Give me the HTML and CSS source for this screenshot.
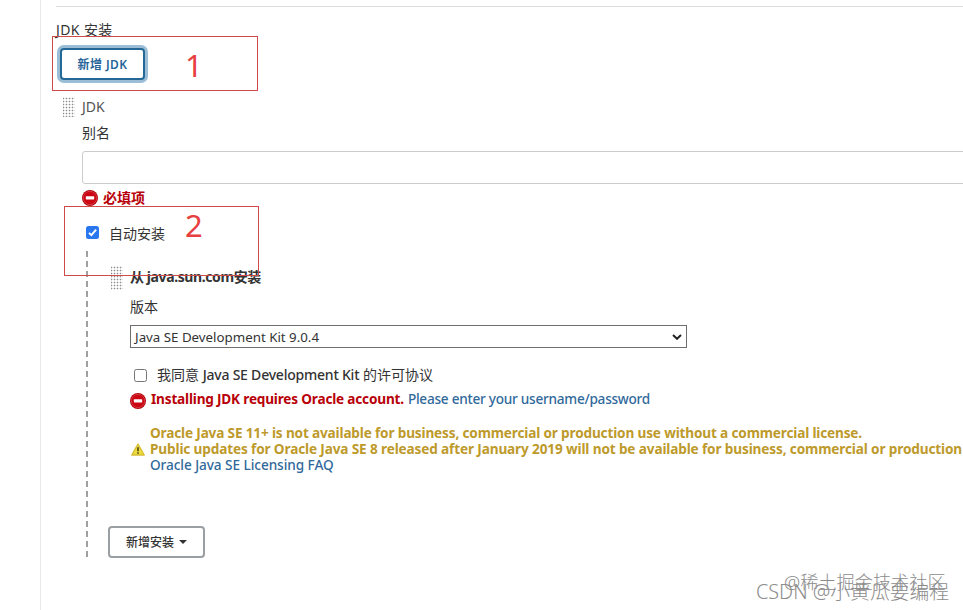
FILE: index.html
```
<!DOCTYPE html>
<html lang="zh-CN">
<head>
<meta charset="utf-8">
<title>JDK 安装</title>
<link rel="stylesheet" href="styles.css">
</head>
<body>
<svg width="0" height="0" class="defs">
  <symbol id="stop" viewBox="0 0 16 16">
    <circle cx="8" cy="8" r="8" fill="#b50009"/>
    <circle cx="8" cy="8" r="6.7" fill="#cc0613" stroke="#da5f66" stroke-width=".6"/>
    <rect x="3.8" y="6.2" width="8.4" height="3.2" rx=".6" fill="#fff"/>
  </symbol>
</svg>
<main class="page">
  <section class="content">
    <h2 class="heading"><span class="t-heading">JDK 安装</span></h2>
    <button class="add"><span class="t-add">新增 JDK</span></button>
    <div class="tool">
      <div class="name"><i class="grip"></i><span class="t-jdk">JDK</span></div>
      <label class="alias">别名</label>
      <input class="field" type="text">
      <div class="error required"><svg class="stop"><use href="#stop"/></svg><span>必填项</span></div>
      <label class="auto"><span class="check on"><svg viewBox="0 0 13 13"><path d="M3 6.8 5.4 9.2 10.1 3.6" fill="none" stroke="#fff" stroke-width="1.9"/></svg></span><span>自动安装</span></label>
    </div>
    <div class="installers">
      <div class="installer">
        <div class="title"><i class="grip tall"></i><span class="t-title">从 java.sun.com安装</span></div>
        <label class="version">版本</label>
        <div class="select"><span class="t-select">Java SE Development Kit 9.0.4</span><svg viewBox="0 0 10 6"><path d="m1 1 4 3.8L9 1" fill="none" stroke="#222" stroke-width="2"/></svg></div>
        <label class="agree"><span class="check"></span><span class="t-agree">我同意 <span class="medium">Java SE Development Kit</span> 的许可协议</span></label>
        <div class="error account"><svg class="stop"><use href="#stop"/></svg><span class="t-err">Installing JDK requires Oracle account.</span><a class="t-login">Please enter your username/password</a></div>
        <div class="warning">
          <svg class="warn" viewBox="0 0 14 13"><path d="M7 1 13.2 12H.8Z" fill="#f0dc3c" stroke="#d5bd35" stroke-linejoin="round" stroke-width="1.4"/><path d="M7 4.2v4" stroke="#4b4315" stroke-width="1.6"/><path d="M7 9.2v1.5" stroke="#4b4315" stroke-width="1.6"/></svg>
          <div class="lines">
            <p><span class="t-w1">Oracle Java SE 11+ is not available for business, commercial or production use without a commercial license.</span></p>
            <p><span class="t-w2">Public updates for Oracle Java SE 8 released after January 2019 will not be available for business, commercial or production</span></p>
            <p><a class="t-faq">Oracle Java SE Licensing FAQ</a></p>
          </div>
        </div>
      </div>
      <button class="more"><span>新增安装</span><i class="caret"></i></button>
    </div>
  </section>
</main>
<div class="mark one"></div><span class="num n1">1</span>
<div class="mark two"></div><span class="num n2">2</span>
<div class="watermark wm1">@稀土掘金技术社区</div>
<div class="watermark wm2">CSDN @小黄瓜要编程</div>
</body>
</html>
```
FILE: styles.css
```
* { box-sizing: border-box; }
body { margin: 0; width: 963px; height: 610px; overflow: hidden; position: relative; background: #fff; color: #333; font: 14px/20px "Noto Sans", "Noto Sans CJK SC", sans-serif; }
.defs { position: absolute; }
svg { display: block; flex: none; }
span, a { white-space: nowrap; }
p { margin: 0; }
button { font: inherit; background: #fff; }
.page { margin-left: 40px; height: 610px; border-left: 1px solid #e9e9e9; padding: 6px 0 0 15px; }
.content { border-top: 1px solid #dcdcdc; padding-top: 13px; }
.heading { margin: 0; height: 28px; font-size: 14px; font-weight: 400; line-height: 20px; }
.t-heading { letter-spacing: .4px; }
.add { display: flex; align-items: center; justify-content: center; width: 85px; height: 32px; margin-left: 4px; padding: 2px 0 0; border: 2px solid #246896; border-radius: 4px; box-shadow: 0 0 0 3px #9bbdd6; color: #286599; font-size: 12px; font-weight: 600; letter-spacing: .45px; }
.tool { padding-left: 26px; }
.name { display: flex; align-items: center; height: 20px; margin: 17px 0 0 -19px; color: #555; }
.grip { width: 12px; height: 20px; margin-right: 7px; background: radial-gradient(circle at 1.5px 1.5px, #8c8c8c .7px, transparent 1.1px) -1px 0 / 3px 3px; }
.grip.tall { height: 24px; }
.alias { display: block; height: 28px; padding-top: 6px; margin-bottom: 6px; }
.field { display: block; width: 900px; height: 33px; border: 1px solid #ccc; border-radius: 3px; outline: 0; }
.error { display: flex; align-items: center; color: #b80008; font-weight: 700; }
.stop { width: 16px; height: 16px; margin-right: 5px; }
.required { height: 20px; margin-top: 4px; }
.auto { display: flex; align-items: center; height: 20px; margin: 16px 0 0 4px; }
.check { width: 13px; height: 13px; flex: none; margin-right: 10px; border: 1px solid #767676; border-radius: 2.5px; }
.check.on { position: relative; top: -2px; border: 0; background: #2877ee; }
.installers { height: 307px; margin: 7px 0 0 30px; padding: 15px 0 0 22px; background: repeating-linear-gradient(#a0a0a0 0 6px, transparent 6px 10px) 0 0 / 2px 100% no-repeat; }
.installer { padding-left: 22px; height: 260px; }
.title { display: flex; align-items: center; height: 24px; margin-left: -19px; font-weight: 700; letter-spacing: -.4px; }
.t-title { position: relative; top: -1px; }
.version { display: block; height: 20px; margin: 7px 0 8px; }
.select { display: flex; align-items: center; justify-content: space-between; width: 557px; height: 23px; padding: 0 4px; border: 1px solid #6e6e6e; font-size: 13.3px; }
.select svg { width: 10px; height: 6px; }
.agree { display: flex; align-items: center; height: 20px; margin: 17px 0 0 4px; }
.medium { font-weight: 500; letter-spacing: -.22px; }
.account { height: 20px; margin-top: 4px; font-size: 13.6px; }
.account .stop { position: relative; top: 2px; }
.t-err { letter-spacing: -.19px; }
.t-login { margin-left: 4px; letter-spacing: -.25px; }
a { color: #31699b; font-weight: 500; }
.warning { display: flex; align-items: center; height: 48px; margin-top: 16px; line-height: 16px; color: #bd9a2b; font-weight: 700; font-size: 13.6px; }
.t-w1 { letter-spacing: -.16px; }
.t-w2 { letter-spacing: -.135px; }
.t-faq { letter-spacing: -.06px; }
.warn { width: 14px; height: 13px; margin: 0 5px 0 1px; }
.more { display: flex; align-items: center; justify-content: center; width: 97px; height: 32px; border: 2px solid #999fa2; border-radius: 4px; padding: 2px 0 0; color: #333; font-size: 12px; font-weight: 500; }
.caret { margin: -2px 0 0 5px; border: 4px solid transparent; border-top-color: #333; border-bottom: 0; }
.mark { position: absolute; border: 1px solid #cf4a4a; }
.one { left: 52px; top: 36px; width: 206px; height: 55px; }
.two { left: 64px; top: 206px; width: 195px; height: 70px; }
.num { position: absolute; color: #e84040; font: 450 31px/32px "Noto Sans", sans-serif; }
.n1 { left: 185px; top: 49px; }
.n2 { left: 185px; top: 209px; }
.watermark { position: absolute; color: #8c8c8c; white-space: nowrap; font-weight: 300; }
.wm1 { left: 784px; top: 570px; font-size: 18.2px; line-height: 24px; }
.wm2 { left: 756px; top: 580px; font-size: 19.8px; line-height: 24px; }
```
